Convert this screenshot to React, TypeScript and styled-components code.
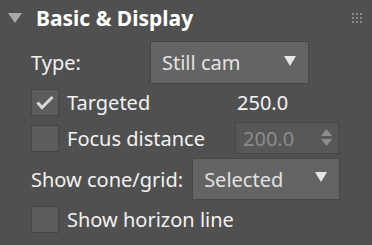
import React from "react";
import styled, { createGlobalStyle } from "styled-components";

const Global = createGlobalStyle`
  html, body { margin: 0; padding: 0; background: #505050; }
  body { font-family: "Noto Sans", "Open Sans", sans-serif; }
`;

const Panel = styled.div`
  width: 372px;
  height: 245px;
  background: #505050;
  box-sizing: border-box;
  display: flex;
  flex-direction: column;
  color: #f2f2f2;
  font-size: 20px;
  overflow: hidden;
`;

const Header = styled.div`
  height: 41px;
  display: flex;
  align-items: center;
  padding: 0 10px 6px 8px;
  box-sizing: border-box;
`;

const Caret = styled.div`
  width: 0;
  height: 0;
  border-left: 7px solid transparent;
  border-right: 7px solid transparent;
  border-top: 10px solid #a9a9a9;
  margin-right: 14px;
`;

const Title = styled.div`
  font-weight: 700;
  font-size: 21px;
  color: #ffffff;
  flex: 1;
`;

const Grip = styled.svg`
  width: 10px;
  height: 10px;
`;

const Row = styled.div<{ $h: number; $mt: number }>`
  height: ${(p) => p.$h}px;
  margin-top: ${(p) => p.$mt}px;
  display: flex;
  align-items: center;
  padding-left: 31px;
`;

const Label = styled.div<{ $w?: number }>`
  width: ${(p) => (p.$w ? `${p.$w}px` : "auto")};
  margin-right: ${(p) => (p.$w ? 0 : 9)}px;
  white-space: nowrap;
`;

const Dropdown = styled.div<{ $w: number }>`
  width: ${(p) => p.$w}px;
  height: 100%;
  box-sizing: border-box;
  background: #646464;
  border: 1px solid #464646;
  display: flex;
  align-items: center;
  padding: 0 12px 0 11px;
  color: #e2e2e2;
`;

const DropText = styled.div`
  flex: 1;
`;

const DropArrow = styled.div`
  width: 0;
  height: 0;
  border-left: 6.5px solid transparent;
  border-right: 6.5px solid transparent;
  border-top: 10px solid #e6e6e6;
  margin-bottom: 4px;
`;

const CheckCell = styled.div`
  width: 204px;
  display: flex;
  align-items: center;
  flex-shrink: 0;
`;

const Box = styled.div`
  width: 28px;
  height: 27px;
  box-sizing: border-box;
  background: #5c5c5c;
  border: 1px solid #444444;
  margin-right: 8px;
  display: flex;
  align-items: center;
  justify-content: center;
`;

const Value = styled.div`
  color: #f4f4f4;
  margin-left: 2px;
`;

const Spinner = styled.div`
  width: 104px;
  height: 100%;
  box-sizing: border-box;
  background: #575757;
  border: 1px solid #464646;
  display: flex;
  align-items: center;
  padding: 0 6px 0 7px;
  color: #8b8b8b;
`;

const SpinText = styled.div`
  flex: 1;
`;

const Arrows = styled.svg`
  width: 11px;
  height: 18px;
`;

export default function App() {
  return (
    <>
      <Global />
      <Panel>
        <Header>
          <Caret />
          <Title>Basic &amp; Display</Title>
          <Grip viewBox="0 0 10 10">
            {[0, 4, 8].map((y) =>
              [0, 4, 8].map((x) => (
                <rect key={`${x}-${y}`} x={x} y={y} width="2" height="2" fill="#8a8a8a" />
              ))
            )}
          </Grip>
        </Header>
        <Row $h={43} $mt={0}>
          <Label $w={119}>Type:</Label>
          <Dropdown $w={159}>
            <DropText>Still cam</DropText>
            <DropArrow />
          </Dropdown>
        </Row>
        <Row $h={27} $mt={5}>
          <CheckCell>
            <Box>
              <svg width="18" height="15" viewBox="0 0 18 15">
                <path d="M1.5 7.5 L6 12.5 L16.5 2" fill="none" stroke="#d8d8d8" strokeWidth="3" strokeLinejoin="miter" />
              </svg>
            </Box>
            <Label>Targeted</Label>
          </CheckCell>
          <Value>250.0</Value>
        </Row>
        <Row $h={32} $mt={6}>
          <CheckCell>
            <Box />
            <Label>Focus distance</Label>
          </CheckCell>
          <Spinner>
            <SpinText>200.0</SpinText>
            <Arrows viewBox="0 0 11 18">
              <polygon points="5.5,0 11,7 0,7" fill="#8d8d8d" />
              <polygon points="0,10 11,10 5.5,17" fill="#8d8d8d" />
            </Arrows>
          </Spinner>
        </Row>
        <Row $h={42} $mt={4}>
          <Label>Show cone/grid:</Label>
          <Dropdown $w={148}>
            <DropText>Selected</DropText>
            <DropArrow />
          </Dropdown>
        </Row>
        <Row $h={27} $mt={6}>
          <Box />
          <Label>Show horizon line</Label>
        </Row>
      </Panel>
    </>
  );
}
